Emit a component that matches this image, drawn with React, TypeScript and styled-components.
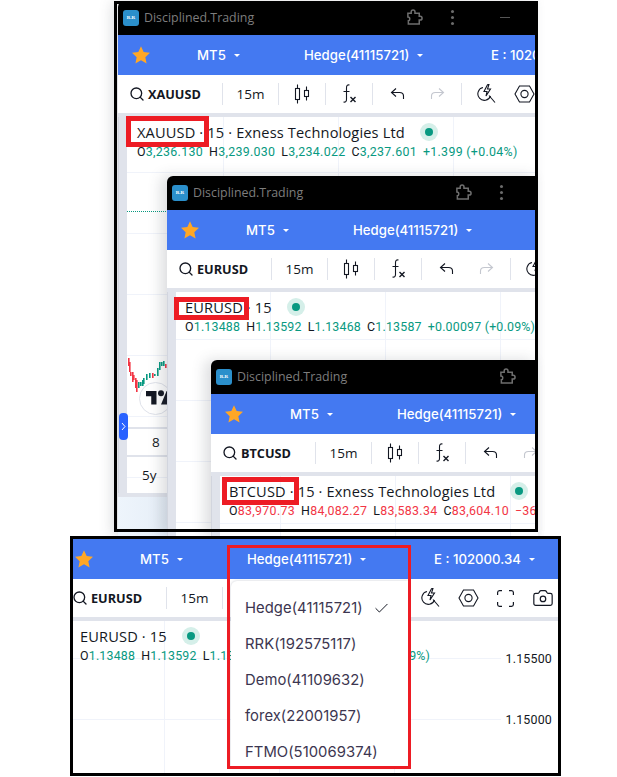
import React from 'react';
import styled, {createGlobalStyle} from 'styled-components';
import {Search, Camera, Check} from 'lucide-react';

const GlobalStyle = createGlobalStyle`
  html, body {
    margin: 0;
    padding: 0;
    background: #fff;
    font-family: "Open Sans", sans-serif;
  }
`;

const Canvas = styled.div`
  position: relative;
  width: 617px;
  height: 777px;
  overflow: hidden;
  background: #fff;
`;

const WindowShell = styled.section<{$left: number; $top: number; $width: number; $height: number; $z: number}>`
  position: absolute;
  left: ${(p) => p.$left}px;
  top: ${(p) => p.$top}px;
  width: ${(p) => p.$width}px;
  height: ${(p) => p.$height}px;
  z-index: ${(p) => p.$z};
  display: flex;
  flex-direction: column;
  overflow: hidden;
  background: #fff;
  border-radius: 6px 0 0 0;
  box-shadow: -6px 0 14px rgba(60, 64, 80, 0.18);
`;

const FlatShell = styled(WindowShell)`
  border-radius: 0;
  box-shadow: none;
`;

const TitleBar = styled.div`
  flex: 0 0 34px;
  box-sizing: border-box;
  display: flex;
  align-items: center;
  background: #000;
  color: #7d7d7d;
  font-size: 12.4px;
  padding: 0 0 1px 5px;
`;

const AppLogo = styled.div`
  flex: none;
  width: 16px;
  height: 16px;
  margin-right: 5px;
  border-radius: 3px;
  background: #2b8fcb;
  color: #fff;
  font: 700 5px/16px "Liberation Serif", serif;
  text-align: center;
`;

const AppName = styled.span`
  flex: 0 0 262px;
`;

const TitleIcons = styled.div`
  flex: none;
  display: flex;
  align-items: center;
  color: #666;
`;

const Dots = styled.div`
  display: flex;
  flex-direction: column;
  gap: 3px;
  margin-left: 28px;
  margin-right: 46px;
  & > i {
    width: 3px;
    height: 3px;
    border-radius: 50%;
    background: #6b6b6b;
  }
`;

const MinimizeBar = styled.div`
  width: 10px;
  height: 1px;
  background: #555;
`;

const BlueBar = styled.header<{$inset: number}>`
  flex: 0 0 40px;
  display: grid;
  grid-template-columns: 66px 107px 187px auto;
  align-items: center;
  padding-left: ${(p) => p.$inset}px;
  background: #4479f1;
  color: #fff;
  font: 500 13.2px "Inter", sans-serif;
  white-space: nowrap;
`;

const StarIcon = styled.svg`
  display: block;
  width: 20px;
  height: 20px;
  fill: #ffa726;
`;

const Picker = styled.div`
  display: flex;
  align-items: center;
  gap: 8px;
`;

const Caret = styled.span`
  width: 0;
  height: 0;
  margin-top: 1px;
  border-left: 3.5px solid transparent;
  border-right: 3.5px solid transparent;
  border-top: 3.5px solid #fff;
`;

const ToolBar = styled.div`
  flex: 0 0 38px;
  display: flex;
  align-items: center;
  background: #fff;
  border-bottom: 4px solid #e0e3eb;
  box-sizing: content-box;
  overflow: hidden;
  color: #131722;
`;

const ToolGroup = styled.div<{$width: number}>`
  flex: 0 0 ${(p) => p.$width}px;
  height: 22px;
  box-sizing: border-box;
  display: flex;
  align-items: center;
  justify-content: center;
  gap: 25px;
  border-right: 1px solid #e0e3eb;
`;

const SearchGroup = styled(ToolGroup)<{$lead: number}>`
  justify-content: flex-start;
  gap: 3px;
  & > svg {
    flex: none;
    margin-left: ${(p) => p.$lead}px;
  }
`;

const Symbol = styled.span`
  font: 700 12.7px "Open Sans", sans-serif;
`;

const Interval = styled.span`
  font: 400 13.5px "Open Sans", sans-serif;
`;

const ToolIcons = styled.div`
  display: flex;
  align-items: center;
  gap: 18px;
  padding-left: 15px;
  flex: none;
  & > svg {
    display: block;
    flex: none;
  }
`;

const Body = styled.div`
  flex: 1;
  min-height: 0;
  display: flex;
  position: relative;
`;

const SideStrip = styled.div`
  flex: 0 0 9px;
  background: #e0e3eb;
  border-left: 1px solid #d2d5de;
  box-sizing: border-box;
`;

const Pane = styled.div<{$gridX: number; $gridY: number}>`
  flex: 1;
  position: relative;
  overflow: hidden;
  background-color: #fff;
  background-image:
    linear-gradient(to right, #f0f3fa 1px, transparent 1px),
    linear-gradient(to bottom, #f0f3fa 1px, transparent 1px);
  background-size: 115px 61px;
  background-position: ${(p) => p.$gridX}px ${(p) => p.$gridY}px;
`;

const Legend = styled.div<{$lead: number}>`
  padding: 5px 0 0 ${(p) => p.$lead}px;
  color: #131722;
  white-space: nowrap;
`;

const LegendTitle = styled.div`
  display: flex;
  align-items: center;
  height: 20px;
  font: 400 14.6px "Open Sans", sans-serif;
  letter-spacing: 0.15px;
`;

const StatusDot = styled.span`
  width: 18px;
  height: 18px;
  margin-left: 15px;
  border-radius: 50%;
  background: #d5efe9;
  display: flex;
  align-items: center;
  justify-content: center;
  &::after {
    content: '';
    width: 8px;
    height: 8px;
    border-radius: 50%;
    background: #089981;
  }
`;

const Ohlc = styled.div<{$down?: boolean; $wide: boolean}>`
  display: flex;
  gap: 6px;
  margin-top: 1px;
  height: 17px;
  font: 400 12.4px/17px "Roboto", sans-serif;
  letter-spacing: ${(p) => (p.$wide ? '0.3px' : '0.2px')};
  color: ${(p) => (p.$down ? '#f23645' : '#089981')};
  & b {
    font-weight: 400;
    color: #131722;
  }
`;

const RedBox = styled.div<{$left: number; $top: number; $width: number; $height: number; $thick: number}>`
  position: absolute;
  left: ${(p) => p.$left}px;
  top: ${(p) => p.$top}px;
  width: ${(p) => p.$width}px;
  height: ${(p) => p.$height}px;
  box-sizing: border-box;
  border: ${(p) => p.$thick}px solid #ed1c24;
  z-index: 20;
  pointer-events: none;
`;

const FrameLine = styled.div`
  position: absolute;
  left: 114px;
  top: 1px;
  width: 424px;
  height: 531px;
  box-sizing: border-box;
  border: 3px solid #000;
  z-index: 10;
  pointer-events: none;
`;

const BottomFrame = styled.div`
  position: absolute;
  left: 70px;
  top: 536px;
  width: 491px;
  height: 240px;
  box-sizing: border-box;
  border: 3px solid #000;
  z-index: 15;
  pointer-events: none;
`;

const LeftDrawer = styled.div`
  position: absolute;
  left: 0;
  top: 310px;
  width: 40px;
  color: #131722;
  font-size: 13.5px;
`;

const DrawerRow = styled.div<{$lead: number; $height: number}>`
  height: ${(p) => p.$height}px;
  box-sizing: border-box;
  padding-left: ${(p) => p.$lead}px;
  border-top: 2px solid #e0e3eb;
  display: flex;
  align-items: center;
`;

const PaleFooter = styled.div`
  position: absolute;
  left: 0;
  bottom: 0;
  width: 49px;
  height: 43px;
  box-sizing: border-box;
  border-top: 4px solid #e0e3eb;
  background: linear-gradient(to right, #eef5fc, #e6eef7);
`;

const Handle = styled.div`
  position: absolute;
  left: 1px;
  top: 296px;
  width: 9px;
  height: 27px;
  border-radius: 4px;
  background: #2962ff;
  display: flex;
  align-items: center;
  justify-content: center;
  z-index: 3;
`;

const SparkSvg = styled.svg`
  position: absolute;
  left: 0;
  top: 240px;
`;

const LogoBadge = styled.div`
  position: absolute;
  left: 12px;
  top: 265px;
  width: 33px;
  height: 33px;
  box-sizing: border-box;
  padding-left: 6px;
  border: 1.5px solid #dfe2ea;
  border-radius: 50%;
  background: #fff;
  display: flex;
  align-items: center;
  & > svg {
    flex: none;
  }
`;

const DottedLine = styled.div`
  position: absolute;
  left: 0;
  top: 94px;
  width: 49px;
  border-top: 1px dotted #089981;
`;

const PriceAxis = styled.div`
  position: absolute;
  right: 0;
  top: 0;
  bottom: 0;
  width: 57px;
  padding: 28px 6px 0 0;
  background: #fff;
  font: 400 12.4px/20px "Roboto", sans-serif;
  letter-spacing: 0.2px;
  color: #131722;
  text-align: right;
  box-sizing: border-box;
  display: flex;
  flex-direction: column;
  gap: 41px;
`;

const Menu = styled.ul`
  position: absolute;
  left: 231px;
  top: 581px;
  width: 177px;
  height: 186px;
  margin: 0;
  padding: 9px 0 0 14px;
  box-sizing: border-box;
  list-style: none;
  background: #fff;
  border-radius: 6px 0 0 0;
  box-shadow: 0 0 3px rgba(40, 50, 80, 0.25);
  z-index: 16;
  color: #3c3650;
  font: 400 14.8px "Inter", sans-serif;
  letter-spacing: 0.05px;
`;

const MenuItem = styled.li`
  height: 36px;
  display: flex;
  align-items: center;
  gap: 10px;
  white-space: nowrap;
`;

const CandleIcon = () => (
  <svg width="16" height="20" viewBox="0 0 16 20" fill="none" stroke="#131722" strokeWidth="1.1">
    <rect x="1.5" y="4.5" width="4" height="11" />
    <path d="M3.5 0.5v4M3.5 15.5v4" />
    <rect x="10.5" y="6.5" width="4" height="6" />
    <path d="M12.5 2.5v4M12.5 12.5v4" />
  </svg>
);

const FxIcon = () => (
  <svg width="16" height="20" viewBox="0 0 16 20" fill="none" stroke="#131722" strokeWidth="1.1">
    <path d="M8.5 1c-2-.5-3 .5-3 2.5v12c0 2-1 3-3 2.5M2.5 7.5h6" />
    <path d="M9.5 13l5 5M14.5 13l-5 5" strokeWidth="1.4" />
  </svg>
);

const ArrowIcon = ({flip, color}: {flip?: boolean; color: string}) => (
  <svg
    width="15"
    height="14"
    viewBox="0 0 15 14"
    fill="none"
    stroke={color}
    strokeWidth="1.1"
    style={flip ? {transform: 'scaleX(-1)'} : undefined}
  >
    <path d="M6 1.5L1.5 5.5 6 9.5M1.5 5.5h8c2.5 0 4 1.5 4 3.5v3" />
  </svg>
);

const BoltIcon = () => (
  <svg width="19" height="20" viewBox="0 0 19 20" fill="none" stroke="#131722" strokeWidth="1.1">
    <path d="M6 3.5a6.5 6.5 0 1 0 7.5 8.5" />
    <path d="M12 11.5l6 7" />
    <path d="M10.5 0.8L7 7.5h3l-1 4.5 4.5-7h-3l1.5-4.7z" />
  </svg>
);

const HexIcon = () => (
  <svg width="21" height="18" viewBox="0 0 21 18" fill="none" stroke="#131722" strokeWidth="1.1">
    <path d="M5.5 1h10l4.5 8-4.5 8h-10L1 9z" />
    <circle cx="10.5" cy="9" r="3.6" />
  </svg>
);

const FrameIcon = () => (
  <svg width="17" height="17" viewBox="0 0 17 17" fill="none" stroke="#131722" strokeWidth="1.2">
    <path d="M5 .6H2.5A2 2 0 0 0 .6 2.5V5M12 .6h2.5a2 2 0 0 1 1.9 1.9V5M16.4 12v2.5a2 2 0 0 1-1.9 1.9H12M.6 12v2.5a2 2 0 0 0 1.9 1.9H5" />
  </svg>
);

const PuzzleIcon = () => (
  <svg width="17" height="17" viewBox="0 0 18 18" fill="none" stroke="#6e6e6e" strokeWidth="1.6">
    <path d="M2 4.5h3.5V3a2 2 0 0 1 4 0v1.5h4.5v3.2h1a2 2 0 0 1 0 4h-1V16H2.5v-3.5c1 0 1.5-1 1.5-2s-.8-2-2-2z" />
  </svg>
);

const Star = () => (
  <StarIcon viewBox="0 0 24 24">
    <path d="M12 1.5l3.2 7 7.6.9-5.6 5.2 1.5 7.6L12 18.4l-6.7 3.8 1.5-7.6L1.2 9.4l7.6-.9z" />
  </StarIcon>
);

// x, top, bottom, falling
const SPARK: [number, number, number, boolean][] = [
  [1, 1, 9, true],
  [2, 5, 15, true],
  [3, 15, 19, true],
  [5, 15, 25, true],
  [6, 18, 23, true],
  [8, 21, 31, true],
  [9, 23, 35, true],
  [11, 25, 31, false],
  [13, 25, 29, false],
  [15, 23, 29, false],
  [16, 21, 27, false],
  [19, 17, 23, false],
  [22, 16, 21, false],
  [25, 16, 21, true],
  [27, 17, 19, false],
  [30, 11, 19, false],
  [32, 5, 13, false],
  [34, 5, 9, false],
  [36, 4, 9, false],
  [38, 7, 11, true],
];

const Spark = () => (
  <SparkSvg width="49" height="60">
    {SPARK.map(([x, y1, y2, falling]) => (
      <rect key={x} x={x} y={y1} width="1.6" height={y2 - y1} fill={falling ? '#f23645' : '#089981'} />
    ))}
  </SparkSvg>
);

type ChartProps = {
  left: number;
  top: number;
  width: number;
  height: number;
  z: number;
  symbol: string;
  title: string;
  ohlc: string[][];
  change: string;
  down?: boolean;
  gridX: number;
  gridY: number;
  lead: number;
  overlay?: React.ReactNode;
  children?: React.ReactNode;
};

const Header = ({inset}: {inset: number}) => (
  <BlueBar $inset={inset}>
    <Star />
    <Picker>
      MT5 <Caret />
    </Picker>
    <Picker>
      Hedge(41115721) <Caret />
    </Picker>
    <Picker>
      E : 102000.34 <Caret />
    </Picker>
  </BlueBar>
);

const Tools = ({symbol, width, lead}: {symbol: string; width: number; lead: number}) => (
  <ToolBar>
    <SearchGroup $width={width} $lead={lead}>
      <Search size={16} strokeWidth={2} />
      <Symbol>{symbol}</Symbol>
    </SearchGroup>
    <ToolGroup $width={56}>
      <Interval>15m</Interval>
    </ToolGroup>
    <ToolGroup $width={47}>
      <CandleIcon />
    </ToolGroup>
    <ToolGroup $width={47}>
      <FxIcon />
    </ToolGroup>
    <ToolGroup $width={89}>
      <ArrowIcon color="#131722" />
      <ArrowIcon flip color="#c4c7cf" />
    </ToolGroup>
    <ToolIcons>
      <BoltIcon />
      <HexIcon />
      <FrameIcon />
      <Camera size={22} strokeWidth={1.3} />
    </ToolIcons>
  </ToolBar>
);

const LegendBlock = ({title, ohlc, change, down, lead}: Pick<ChartProps, 'title' | 'ohlc' | 'change' | 'down' | 'lead'>) => (
  <Legend $lead={lead}>
    <LegendTitle>
      {title}
      <StatusDot />
    </LegendTitle>
    <Ohlc $down={down} $wide={ohlc[0][1].includes(',')}>
      {ohlc.map(([k, v]) => (
        <span key={k}>
          <b>{k}</b>
          {v}
        </span>
      ))}
      <span>{change}</span>
    </Ohlc>
  </Legend>
);

const ChartWindow = ({left, top, width, height, z, symbol, title, ohlc, change, down, gridX, gridY, lead, overlay, children}: ChartProps) => (
  <WindowShell $left={left} $top={top} $width={width} $height={height} $z={z}>
    <TitleBar>
      <AppLogo>R.R</AppLogo>
      <AppName>Disciplined.Trading</AppName>
      <TitleIcons>
        <PuzzleIcon />
        <Dots>
          <i />
          <i />
          <i />
        </Dots>
        <MinimizeBar />
      </TitleIcons>
    </TitleBar>
    <Header inset={13} />
    <Tools symbol={symbol} width={105} lead={11} />
    <Body>
      <SideStrip />
      <Pane $gridX={gridX} $gridY={gridY}>
        <LegendBlock title={title} ohlc={ohlc} change={change} down={down} lead={lead} />
        {children}
      </Pane>
      {overlay}
    </Body>
  </WindowShell>
);

const ACCOUNTS = ['Hedge(41115721)', 'RRK(192575117)', 'Demo(41109632)', 'forex(22001957)', 'FTMO(510069374)'];

const App = () => (
  <Canvas>
    <GlobalStyle />
    <ChartWindow
      left={118}
      top={1}
      width={420}
      height={535}
      z={1}
      symbol="XAUUSD"
      title="XAUUSD · 15 · Exness Technologies Ltd"
      ohlc={[
        ['O', '3,236.130'],
        ['H', '3,239.030'],
        ['L', '3,234.022'],
        ['C', '3,237.601'],
      ]}
      change="+1.399 (+0.04%)"
      gridX={-19}
      gridY={55}
      lead={10}
      overlay={
        <>
          <PaleFooter />
          <Handle>
            <svg width="5" height="9" viewBox="0 0 5 9" fill="none" stroke="#fff" strokeWidth="1">
              <path d="M1 1l3 3.5L1 8" />
            </svg>
          </Handle>
        </>
      }
    >
      <DottedLine />
      <Spark />
      <LogoBadge>
        <svg width="27" height="21" viewBox="0 0 36 28" fill="#131722">
          <path d="M14 22H7V11H0V4h14v18zM28 22h-8l7.5-18h8L28 22z" />
          <circle cx="20" cy="7" r="4" />
        </svg>
      </LogoBadge>
      <LeftDrawer>
        <DrawerRow $lead={25} $height={28}>8</DrawerRow>
        <DrawerRow $lead={15} $height={38}>5y</DrawerRow>
      </LeftDrawer>
    </ChartWindow>
    <ChartWindow
      left={167}
      top={176}
      width={371}
      height={360}
      z={2}
      symbol="EURUSD"
      title="EURUSD · 15"
      ohlc={[
        ['O', '1.13488'],
        ['H', '1.13592'],
        ['L', '1.13468'],
        ['C', '1.13587'],
      ]}
      change="+0.00097 (+0.09%)"
      gridX={94}
      gridY={47}
      lead={9}
    />
    <ChartWindow
      left={211}
      top={360}
      width={327}
      height={176}
      z={3}
      symbol="BTCUSD"
      title="BTCUSD · 15 · Exness Technologies Ltd"
      ohlc={[
        ['O', '83,970.73'],
        ['H', '84,082.27'],
        ['L', '83,583.34'],
        ['C', '83,604.10'],
      ]}
      change="−366.63 (−0.44%)"
      down
      gridX={60}
      gridY={47}
      lead={9}
    />
    <FrameLine />
    <RedBox $left={126} $top={116} $width={83} $height={31} $thick={5} />
    <RedBox $left={174} $top={297} $width={75} $height={23} $thick={5} />
    <RedBox $left={222} $top={477} $width={77} $height={28} $thick={5} />

    <FlatShell $left={73} $top={539} $width={485} $height={234} $z={12}>
      <Header inset={1} />
      <Tools symbol="EURUSD" width={94} lead={-1} />
      <Body>
        <Pane $gridX={91} $gridY={37}>
          <LegendBlock
            title="EURUSD · 15"
            ohlc={[
              ['O', '1.13488'],
              ['H', '1.13592'],
              ['L', '1.13468'],
              ['C', '1.13587'],
            ]}
            change="+0.00097 (+0.09%)"
            lead={7}
          />
          <PriceAxis>
            <span>1.15500</span>
            <span>1.15000</span>
          </PriceAxis>
        </Pane>
      </Body>
    </FlatShell>
    <BottomFrame />
    <Menu>
      {ACCOUNTS.map((a, i) => (
        <MenuItem key={a}>
          {a}
          {i === 0 && <Check size={17} strokeWidth={1.4} color="#131722" />}
        </MenuItem>
      ))}
    </Menu>
    <RedBox $left={227} $top={545} $width={184} $height={224} $thick={3} />
  </Canvas>
);

export default App;
